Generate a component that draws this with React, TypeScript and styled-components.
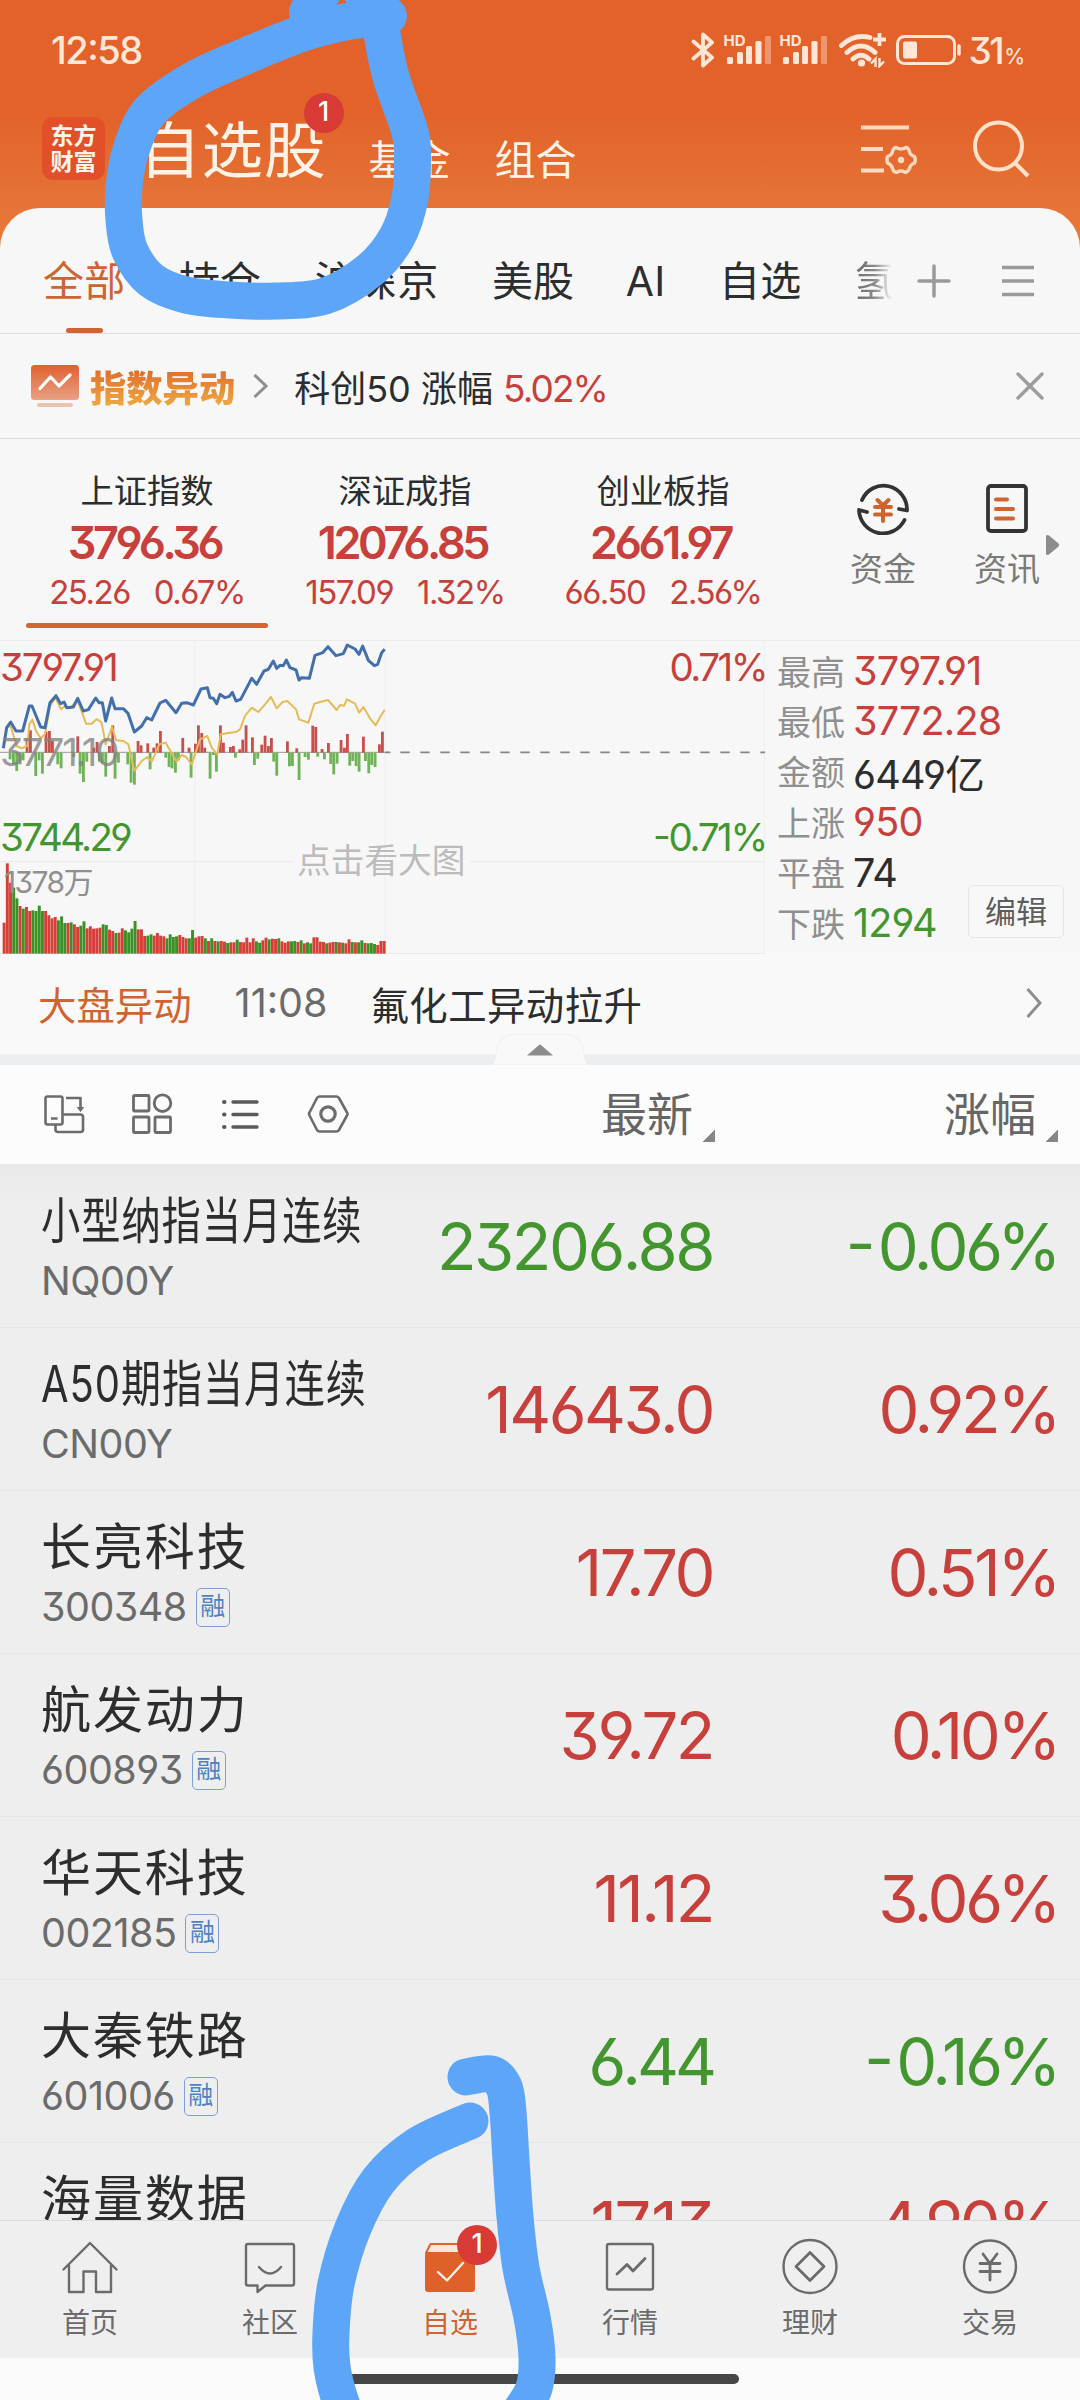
import React from "react";
import styled, { createGlobalStyle, css } from "styled-components";

const RED = "#c8403b";
const GREEN = "#43962f";
const ORANGE = "#cf6430";
const INK = "#2b2d2e";
const GRAY = "#6b6b6b";
const MARKER = "#5ca5f8";

const Global = createGlobalStyle`
  * { box-sizing: border-box; }
  body { margin: 0; background: #f7f7f7; }
`;

const Screen = styled.div`
  position: relative;
  width: 1080px;
  height: 2400px;
  overflow: hidden;
  display: flex;
  flex-direction: column;
  font-family: Inter, "Noto Sans CJK SC", sans-serif;
  font-feature-settings: "cv03", "cv04", "cv09", "case";
  color: ${INK};
  background: linear-gradient(#e3622b 0px, #e2622a 110px, #e77a3a 240px);
  white-space: nowrap;
`;

/* ---------- status bar + header ---------- */
const StatusBar = styled.div`
  height: 100px;
  flex: none;
  display: flex;
  align-items: center;
  justify-content: space-between;
  padding: 0 56px 0 51px;
  color: #ffe6d6;
`;
const Clock = styled.span`
  font-size: 38px;
  font-weight: 500;
  letter-spacing: -1.5px;
`;
const StatusIcons = styled.div`
  display: flex;
  align-items: center;
`;
const Battery = styled.span`
  font-size: 37px;
  font-weight: 500;
  letter-spacing: -2.5px;
  margin-left: 7px;
  small {
    font-size: 21px;
    font-weight: 500;
    letter-spacing: -1px;
    margin-left: 2px;
  }
`;
const Header = styled.header`
  height: 108px;
  flex: none;
  display: flex;
  padding-left: 42px;
  color: #fff2e6;
`;
const Logo = styled.div`
  width: 63px;
  height: 63px;
  margin-top: 17px;
  border-radius: 11px;
  background: #e2502a;
  display: flex;
  flex-direction: column;
  align-items: center;
  justify-content: center;
  font-size: 23px;
  line-height: 26px;
  font-weight: 700;
  color: #fff5ec;
`;
const MainTab = styled.div`
  position: relative;
  margin-left: 34px;
  margin-top: 15px;
  font-size: 61.5px;
  line-height: 72px;
  letter-spacing: 1px;
`;
const SubTab = styled.div<{ $gap: number }>`
  margin-left: ${(p) => p.$gap}px;
  margin-top: 35px;
  font-size: 41px;
  line-height: 50px;
`;
const Dot = styled.span`
  position: absolute;
  width: 40px;
  height: 40px;
  border-radius: 50%;
  background: #d83a36;
  color: #fff;
  font-size: 27px;
  font-weight: 500;
  line-height: 38px;
  letter-spacing: 0;
  text-align: center;
`;
const HeaderDot = styled(Dot)`
  right: -17px;
  top: -22px;
`;
const HeaderIcons = styled.div`
  margin-left: auto;
  margin-right: 50px;
  margin-top: 20px;
  display: flex;
  gap: 56px;
`;

/* ---------- panel ---------- */
const Panel = styled.main`
  flex: 1;
  min-height: 0;
  display: flex;
  flex-direction: column;
  background: #f7f7f7;
  border-radius: 40px 40px 0 0;
  overflow: hidden;
`;
const Tabs = styled.nav`
  height: 126px;
  flex: none;
  display: flex;
  border-bottom: 1px solid #dcdcdc;
  padding-left: 43px;
  font-size: 41px;
  line-height: 146px;
  letter-spacing: 0.2px;
`;
const Tab = styled.div<{ $active?: boolean; $pull?: number }>`
  position: relative;
  margin-right: 53.5px;
  margin-left: ${(p) => p.$pull ?? 0}px;
  color: ${(p) => (p.$active ? ORANGE : INK)};
  ${(p) =>
    p.$active &&
    css`
      &::after {
        content: "";
        position: absolute;
        left: 23px;
        bottom: 0;
        width: 37px;
        height: 5px;
        border-radius: 3px;
        background: ${ORANGE};
      }
    `}
`;
const FadeTab = styled(Tab)`
  width: 37px;
  margin-right: 26px;
  overflow: hidden;
  background: linear-gradient(90deg, #6a6a6a, #8a8a8a 55%, rgba(160, 160, 160, 0.1));
  -webkit-background-clip: text;
  background-clip: text;
  color: transparent;
`;
const TabIcons = styled.div`
  display: flex;
  align-items: center;
  gap: 51px;
  padding-top: 21px;
`;

const Notice = styled.div`
  height: 105px;
  flex: none;
  display: flex;
  align-items: center;
  padding: 0 36px 0 31px;
  border-bottom: 1px solid #dcdcdc;
  font-size: 36px;
`;
const NoticeTitle = styled.span`
  margin-left: 10px;
  margin-right: 18px;
  font-weight: 900;
  font-size: 36.3px;
  background: linear-gradient(#e06a2c 15%, #eda63f 85%);
  -webkit-background-clip: text;
  background-clip: text;
  color: transparent;
`;
const NoticeText = styled.span`
  margin-left: 26px;
  flex: 1;
  letter-spacing: 0;
  b {
    font-weight: 400;
    font-size: 37px;
    color: ${RED};
    letter-spacing: -1.9px;
  }
`;

const Indices = styled.section`
  height: 201px;
  flex: none;
  display: flex;
  padding-left: 18px;
`;
const IndexCard = styled.div`
  position: relative;
  width: 258px;
  display: flex;
  flex-direction: column;
  align-items: center;
  padding-top: 30px;
`;
const IndexName = styled.div`
  font-size: 33.3px;
  line-height: 44px;
`;
const IndexValue = styled.div`
  margin-top: 8px;
  padding-right: 5px;
  font-size: 45px;
  line-height: 44px;
  font-weight: 600;
  letter-spacing: -3.4px;
  color: ${RED};
`;
const IndexDelta = styled.div`
  display: flex;
  gap: 24px;
  margin-top: 9px;
  font-size: 33px;
  line-height: 36px;
  letter-spacing: -1.5px;
  color: ${RED};
`;
const ActiveBar = styled.div`
  width: 242px;
  height: 5px;
  margin-top: 13px;
  border-radius: 3px;
  background: #d4662f;
`;
const Shortcut = styled.div<{ $left: number }>`
  width: 66px;
  margin-left: ${(p) => p.$left}px;
  padding-top: 42px;
  display: flex;
  flex-direction: column;
  align-items: center;
  font-size: 33px;
  line-height: 46px;
  color: #7a7a7a;
  svg {
    margin-bottom: 11px;
  }
`;
const MoreArrow = styled.svg`
  margin: 95px 0 0 6px;
`;

const Market = styled.section`
  height: 313px;
  flex: none;
  display: flex;
  border-top: 1px solid #ebebeb;
`;
const ChartBox = styled.div`
  position: relative;
  width: 765px;
  height: 313px;
`;
const ChartLabel = styled.span<{
  $top: number;
  $color: string;
  $size?: number;
  $right?: boolean;
  $x?: number;
  $ls?: number;
}>`
  position: absolute;
  top: ${(p) => p.$top}px;
  ${(p) => (p.$right ? "right: -1px" : `left: ${p.$x ?? 0}px`)};
  color: ${(p) => p.$color};
  font-size: ${(p) => p.$size ?? 38.5}px;
  line-height: 44px;
  letter-spacing: ${(p) => p.$ls ?? -2}px;
`;
const Stats = styled.div`
  flex: 1;
  position: relative;
  padding: 4px 0 0 12px;
`;
const Stat = styled.div<{ $color: string }>`
  display: flex;
  align-items: center;
  height: 50.4px;
  font-size: 34px;
  color: #8f8f8f;
  b {
    margin: 1.5px 0 0 8px;
    font-weight: 400;
    font-size: 39.5px;
    letter-spacing: -0.8px;
    color: ${(p) => p.$color};
  }
`;
const EditButton = styled.button`
  position: absolute;
  right: 16px;
  top: 244px;
  width: 96px;
  height: 53px;
  padding: 0 0 4px;
  border: 1px solid #e6e6e6;
  border-radius: 5px;
  background: #f8f8f8;
  font: 31px Inter, "Noto Sans CJK SC", sans-serif;
  color: #5d5d5d;
`;

const News = styled.div`
  height: 101px;
  flex: none;
  display: flex;
  align-items: center;
  padding: 0 38px 2px;
  font-size: 38.4px;
  background: #f9f9f9;
`;
const NewsTag = styled.span`
  color: ${ORANGE};
`;
const NewsTime = styled.span`
  margin: 1px 43px 0 43px;
  font-size: 39.5px;
  color: ${GRAY};
`;
const NewsText = styled.span`
  letter-spacing: 0.45px;
`;
const Spacer = styled.div`
  flex: 1;
`;
const Divider = styled.div`
  position: relative;
  height: 11px;
  flex: none;
  background: #edeef0;
`;
const Handle = styled.svg`
  position: absolute;
  left: 491px;
  top: -21px;
`;

const Toolbar = styled.div`
  height: 99px;
  flex: none;
  display: flex;
  align-items: center;
  background: #fcfcfc;
  padding: 0 0 2px 43px;
`;
const ToolIcons = styled.div`
  width: 558px;
  display: flex;
  gap: 46px;
`;
const Sort = styled.div<{ $width: number }>`
  width: ${(p) => p.$width}px;
  display: flex;
  justify-content: flex-end;
  align-items: center;
  font-size: 46px;
  line-height: 60px;
  color: #666;
  &::after {
    content: "";
    width: 13px;
    height: 13px;
    margin: 44px 0 0 9px;
    background: linear-gradient(135deg, transparent 50%, #85858a 50%);
  }
`;

const List = styled.div`
  flex: 1;
  min-height: 0;
  overflow: hidden;
  padding-top: 1px;
  background: linear-gradient(#e9e9e9, #eeeeee 40px, #eeeeee);
`;
const Row = styled.div`
  height: 163px;
  display: grid;
  grid-template-columns: 375px 338px 345px;
  border-bottom: 1px solid #e6e6e6;
`;
const Security = styled.div`
  padding: 26px 0 0 41px;
`;
const Name = styled.div<{ $scale?: number }>`
  width: max-content;
  font-size: 50px;
  line-height: 60px;
  letter-spacing: ${(p) => (p.$scale ? 1.2 : 1.9)}px;
  transform-origin: 0 50%;
  ${(p) => p.$scale && `transform: scaleX(${p.$scale});`}
`;
const CodeLine = styled.div`
  display: flex;
  align-items: center;
  height: 40px;
  margin-top: 10px;
  font-size: 39.5px;
  letter-spacing: -0.5px;
  color: ${GRAY};
`;
const Margin = styled.span`
  width: 34px;
  height: 39px;
  margin-left: 9px;
  border: 1.5px solid #7d9fd2;
  border-radius: 5px;
  font-size: 25px;
  line-height: 35px;
  letter-spacing: 0;
  color: #4f82c4;
  display: flex;
  justify-content: center;
`;
const Figure = styled.div<{ $up: boolean; $ls: number }>`
  padding-top: 42px;
  text-align: right;
  font-size: 65px;
  line-height: 80px;
  letter-spacing: ${(p) => p.$ls}px;
  color: ${(p) => (p.$up ? RED : GREEN)};
`;
const Sign = styled.span`
  letter-spacing: 2px;
`;

/* ---------- bottom ---------- */
const BottomNav = styled.nav`
  height: 138px;
  flex: none;
  display: grid;
  grid-template-columns: repeat(6, 180px);
  border-top: 1px solid #dcdcde;
  background: #efeff0;
`;
const NavItem = styled.div<{ $active?: boolean }>`
  position: relative;
  display: flex;
  flex-direction: column;
  align-items: center;
  padding-top: 16px;
  font-size: 28px;
  line-height: 42px;
  color: ${(p) => (p.$active ? ORANGE : "#6b6b6b")};
  svg {
    margin-bottom: 5px;
  }
`;
const NavDot = styled(Dot)`
  left: 97px;
  top: 4px;
`;
const Gesture = styled.div`
  height: 42px;
  flex: none;
  background: #fafafa;
  padding-top: 16px;
  &::after {
    content: "";
    display: block;
    width: 398px;
    height: 10px;
    margin: 0 auto;
    border-radius: 5px;
    background: #474747;
  }
`;
const Scribble = styled.svg`
  position: absolute;
  inset: 0;
  pointer-events: none;
`;

/* Catmull-Rom curve through a list of points. */
type Pt = [number, number];
const smooth = (p: Pt[]) => {
  let d = `M${p[0][0]} ${p[0][1]}`;
  for (let i = 0; i < p.length - 1; i++) {
    const a = p[i - 1] ?? p[i];
    const b = p[i];
    const c = p[i + 1];
    const e = p[i + 2] ?? c;
    d += ` C${b[0] + (c[0] - a[0]) / 6} ${b[1] + (c[1] - a[1]) / 6} ${c[0] - (e[0] - b[0]) / 6} ${
      c[1] - (e[1] - b[1]) / 6
    } ${c[0]} ${c[1]}`;
  }
  return d;
};

const LOOP_TOP: Pt[] = [
  [385, 17], [345, 22], [303, 33], [248, 55], [193, 80], [150, 111], [131, 150], [124, 187], [124, 220],
  [130, 251], [151, 280], [186, 295], [230, 300], [275, 301], [325, 296], [370, 270], [397, 237], [410, 198],
  [412.5, 158], [410, 132], [391, 77], [382, 34],
];
const LOOP_LEFT: Pt[] = [
  [470, 2121], [418, 2145], [379, 2180], [353, 2228], [336, 2284], [331, 2333], [332, 2367], [340, 2400], [352, 2428],
];
const LOOP_RIGHT: Pt[] = [
  [466, 2077], [491, 2074], [504, 2087], [508, 2112], [511, 2160], [515, 2217], [521, 2268], [532, 2317], [537, 2357],
  [534, 2388], [520, 2412],
];

/* ---------- intraday chart ---------- */
const PRICE = [
  10, 352, 20, 290, 32, 273, 48, 300, 68, 300, 88, 225, 96, 225, 122, 288, 135, 290, 150, 215, 168, 194, 182, 218,
  192, 213, 200, 230, 220, 228, 233, 202, 250, 240, 265, 236, 287, 201, 297, 215, 307, 215, 317, 270, 335, 201, 345,
  233, 370, 233, 384, 247, 403, 303, 425, 285, 440, 260, 455, 267, 480, 216, 497, 208, 528, 245, 545, 217, 560, 215,
  580, 222, 603, 174, 622, 170, 630, 200, 640, 202, 650, 218, 660, 190, 675, 200, 688, 196, 697, 184, 708, 210, 722,
  205, 755, 142, 770, 160, 792, 120, 805, 115, 820, 90, 830, 112, 840, 103, 850, 104, 859, 87, 870, 110, 888, 117,
  897, 147, 905, 140, 928, 142, 945, 73, 968, 65, 984, 47, 1008, 74, 1030, 68, 1042, 42, 1065, 54, 1077, 70, 1088,
  45, 1105, 88, 1123, 104, 1133, 100, 1145, 65, 1154, 55,
];
const AVERAGE = [
  12, 335, 20, 290, 32, 285, 50, 345, 65, 352, 82, 345, 88, 280, 97, 266, 108, 300, 122, 322, 135, 310, 150, 225,
  166, 200, 183, 235, 195, 225, 210, 232, 232, 208, 243, 235, 258, 278, 275, 278, 290, 264, 305, 275, 317, 340, 336,
  288, 348, 328, 370, 330, 385, 340, 403, 420, 425, 390, 442, 378, 455, 392, 478, 340, 497, 335, 530, 392, 545, 372,
  558, 378, 575, 400, 600, 325, 622, 315, 635, 350, 652, 370, 662, 310, 690, 305, 708, 303, 720, 295, 735, 255, 755,
  230, 775, 243, 795, 220, 813, 198, 830, 232, 848, 213, 862, 210, 888, 235, 897, 265, 925, 275, 943, 218, 960, 213,
  984, 207, 1010, 237, 1020, 222, 1032, 224, 1041, 205, 1065, 218, 1078, 245, 1090, 228, 1110, 262, 1127, 283, 1142,
  255, 1154, 237,
];
const UP = [
  78, 322, 88, 298, 135, 302, 145, 300, 154, 330, 230, 316, 278, 350, 288, 333, 325, 345, 335, 283, 411, 330, 420,
  343, 440, 337, 458, 350, 468, 337, 478, 300, 545, 321, 564, 350, 583, 338, 592, 283, 602, 306, 611, 350, 658, 283,
  667, 335, 688, 348, 697, 345, 716, 355, 725, 326, 735, 283, 754, 319, 782, 341, 792, 314, 802, 345, 811, 321, 859,
  331, 887, 352, 935, 284, 944, 288, 963, 354, 982, 336, 1020, 327, 1030, 350, 1039, 309, 1087, 317, 1135, 340, 1144,
  302,
];
const DOWN = [
  30, 385, 40, 400, 50, 420, 60, 400, 69, 388, 107, 435, 117, 388, 127, 428, 173, 400, 183, 412, 221, 378, 240, 428,
  250, 453, 260, 392, 298, 392, 307, 396, 317, 437, 345, 443, 355, 395, 383, 400, 393, 455, 403, 461, 450, 415, 497,
  380, 507, 408, 516, 412, 526, 425, 535, 388, 573, 440, 630, 443, 640, 372, 649, 422, 706, 380, 763, 402, 773, 383,
  821, 392, 830, 434, 868, 406, 877, 405, 897, 447, 915, 378, 925, 386, 953, 377, 973, 385, 992, 399, 1001, 430,
  1011, 398, 1049, 404, 1058, 390, 1068, 405, 1077, 422, 1096, 390, 1106, 427, 1115, 402, 1125, 408,
];
const VOLUME =
  "875R 697R 755R 770G 802G 825R 833G 828R 840R 838G 840G 824G 840G 840R 853R 862R 858R 868G 856G 876G 876R 874G 880R 888R 884G 871G 892R 886R 893R 892R 890R 880G 882G 896R 900R 906G 905R 892R 898G 904G 893G 870G 895R 895R 915R 914G 910G 914R 906R 914R 916R 922G 910G 918G 916G 912R 918R 922R 922G 897G 920R 916R 915R 922G 930R 922G 930R 931G 930R 932R 936G 934R 934R 926G 933R 934R 920R 934R 922R 931G 935G 928R 920R 925G 923R 924R 922G 931R 935R 931R 931G 930G 933R 928G 937R 934G 937G 919R 919R 932R 933R 937G 935R 933R 933G 934R 935G 937R 925R 933G 934R 934G 928G 936R 937G 936G 939G 942R 930R 930R".split(
    " "
  );
const pairs = (a: number[]): Pt[] => a.reduce<Pt[]>((r, v, i) => (i % 2 ? r : [...r, [v, a[i + 1]]]), []);
const line = (a: number[]) => pairs(a).map((p) => p.join(",")).join(" ");

const Chart = () => (
  <svg width="765" height="313" viewBox="0 30 2295 939" style={{ display: "block" }}>
    <g stroke="#e9e9e9" strokeWidth="3">
      <path d="M585 30V969M1155 30V969M2293 30V969" stroke="#efefef" />
      <path d="M0 692H878M1410 692H2295M0 967H2295" />
    </g>
    <path d="M0 364H1172" stroke="#9a9a9a" strokeWidth="3" />
    <path d="M1155 364H2295" stroke="#858585" strokeWidth="5" strokeDasharray="28 32" strokeDashoffset="14" />
    {pairs(UP).map(([x, y]) => (
      <rect key={x} x={x - 1} y={y} width="8.500" height={365 - y} fill="#c8504c" />
    ))}
    {pairs(DOWN).map(([x, y]) => (
      <rect key={x} x={x - 4} y="365" width="8.500" height={y - 365} fill="#6eb356" />
    ))}
    {VOLUME.map((v, i) => {
      const y = parseInt(v, 10);
      return (
        <rect
          key={i}
          x={8 + i * 9.58}
          y={y}
          width="8.8"
          height={968 - y}
          fill={v.endsWith("R") ? "#d63e38" : "#3a9126"}
        />
      );
    })}
    <polyline points={line(AVERAGE)} fill="none" stroke="#e6bb57" strokeWidth="6" strokeLinejoin="round" />
    <polyline points={line(PRICE)} fill="none" stroke="#4370ac" strokeWidth="9" strokeLinejoin="round" />
  </svg>
);

/* ---------- icons ---------- */
const Bluetooth = () => (
  <svg width="24" height="36" viewBox="0 0 24 36" fill="none" stroke="currentColor" strokeWidth="3.800" strokeLinejoin="round" strokeLinecap="round">
    <path d="M2.5 9.5L21 25.5L12 33.5V2.5L21 10.5L2.5 26.5" />
  </svg>
);
const HdLabel = styled.span`
  position: absolute;
  left: -1px;
  top: 0;
  font-size: 15px;
  line-height: 12px;
  font-weight: 700;
`;
const SignalBox = styled.div`
  position: relative;
  width: 46px;
  height: 30px;
  margin-left: 10px;
`;
const Signal = () => (
  <SignalBox>
    <HdLabel>HD</HdLabel>
    <svg width="46" height="30" fill="currentColor">
      <rect x="2" y="22" width="6" height="7" rx="1.5" />
      <rect x="12" y="17" width="6" height="12" rx="1.5" />
      <rect x="21" y="11" width="6" height="18" rx="1.5" />
      <rect x="30.500" y="6" width="6" height="23" rx="1.5" />
      <rect x="40" y="1" width="6" height="28" rx="1.5" opacity="0.4" />
    </svg>
  </SignalBox>
);
const Wifi = () => (
  <svg width="48" height="36" viewBox="0 0 48 36" fill="none" stroke="currentColor" strokeWidth="4.800" style={{ marginLeft: 12 }}>
    <path d="M2.500 13.500Q15 1.500 31 5.500M8 20.500Q22 7.500 36 20.500M14 27Q22 19.500 30 27" strokeLinecap="round" />
    <circle cx="22.500" cy="31" r="3.600" fill="currentColor" stroke="none" />
    <path d="M34 7.500H47M40.500 1V14" strokeWidth="3.800" />
    <path d="M36.500 35V27L32 31.500M40.500 26V34L45 29.500" strokeWidth="2.400" />
  </svg>
);
const BatteryIcon = () => (
  <svg width="66" height="30" fill="none" stroke="currentColor" strokeWidth="3" style={{ marginLeft: 9 }}>
    <rect x="1.500" y="1.500" width="57" height="27" rx="7" />
    <rect x="7" y="6.500" width="14" height="17" rx="2" fill="currentColor" stroke="none" />
    <path d="M63 11V19" strokeWidth="3.500" strokeLinecap="round" />
  </svg>
);
const FilterIcon = () => (
  <svg width="56" height="54" fill="none" stroke="#ffd9bd" strokeWidth="4">
    <path d="M0 7.500H48M0 29H22M0 50.500H23" />
    <path
      d="M35 27.500Q40 30.500 45 27.500Q47.500 28 48.500 31.500Q49 35 53.500 36.500Q55 40 53.500 43Q49 45 48.500 48.500Q47 52 44.500 52.500Q40 49.500 35.500 52.500Q32.500 52 31.500 48.500Q31 45 26.500 43Q25.500 40 26.500 36.500Q31 35 31.500 31.500Q32.500 28 35 27.500Z"
      strokeWidth="3.400"
      strokeLinejoin="round"
    />
    <circle cx="40" cy="40" r="3.200" fill="#ffd9bd" stroke="none" />
  </svg>
);
const SearchIcon = () => (
  <svg width="57" height="58" fill="none" stroke="#ffe0c8" strokeWidth="4">
    <circle cx="25.500" cy="26" r="23.500" />
    <path d="M42 43L55 56" />
  </svg>
);
const PlusIcon = () => (
  <svg width="34" height="34" stroke="#9a9a9a" strokeWidth="3.500" strokeLinecap="round">
    <path d="M2 17H32M17 2V32" />
  </svg>
);
const MenuIcon = () => (
  <svg width="32" height="34" stroke="#9a9a9a" strokeWidth="3.600">
    <path d="M0 3.500H32M0 17H32M0 30.500H32" />
  </svg>
);
const NoticeIcon = () => (
  <svg width="49" height="44" viewBox="0 0 49 44" fill="none">
    <defs>
      <linearGradient id="ng" x2="0" y2="1">
        <stop stopColor="#e0602f" />
        <stop offset="1" stopColor="#e9a184" />
      </linearGradient>
    </defs>
    <rect y="1" width="48" height="35" rx="3.500" fill="url(#ng)" />
    <rect x="6" y="39" width="36" height="4" rx="2" fill="#ecc3b0" />
    <path d="M9 24.500L19.500 13L28 22L39 11" stroke="#fff" strokeWidth="3.200" strokeLinecap="round" strokeLinejoin="round" />
  </svg>
);
const Chevron = ({ w, h }: { w: number; h: number }) => (
  <svg width={w} height={h} fill="none" stroke="#8e8e8e" strokeWidth="3">
    <path d={`M1.500 1L${w - 2} ${h / 2}L1.500 ${h - 1}`} />
  </svg>
);
const CloseIcon = () => (
  <svg width="28" height="28" stroke="#9c9c9c" strokeWidth="3.400" strokeLinecap="round">
    <path d="M2 2L26 26M26 2L2 26" />
  </svg>
);
const FundIcon = () => (
  <svg width="52" height="54" viewBox="0 0 52 54" fill="none" stroke="#333" strokeWidth="3.800" strokeLinecap="round" strokeLinejoin="round">
    <path d="M5 19A23.500 24 0 0 1 50 29.500L42 28" />
    <path d="M10 31L2 29A24 24 0 0 0 47.500 39" />
    <path d="M20.500 19L26 24.500L31.500 19M18 26H34M18 33.500H34M26 25V40" stroke={ORANGE} strokeWidth="4" />
  </svg>
);
const DocIcon = () => (
  <svg width="44" height="54" viewBox="0 0 44 54" fill="none" stroke="#333" strokeWidth="3.800" strokeLinecap="round">
    <rect x="3" y="5" width="38" height="45" rx="3" />
    <path d="M11 18.500H22M11 28H28M11 37.500H28" stroke={ORANGE} strokeWidth="4" />
  </svg>
);
const RotateIcon = () => (
  <svg width="42" height="42" fill="none" stroke="#6c6c6c" strokeWidth="2.600" strokeLinejoin="round">
    <rect x="2.500" y="3.500" width="17" height="28" rx="2" />
    <path d="M8 25.500H14.500M20.500 21.500H37.500Q40 21.500 40 24V36.500Q40 39 37.500 39H15Q12.500 39 12.500 36.500V32M23 5H37.500V16" />
    <path d="M34.500 14.500H40.500L37.500 18.500Z" fill="#6c6c6c" strokeWidth="1" />
  </svg>
);
const GridIcon = () => (
  <svg width="42" height="42" fill="none" stroke="#6c6c6c" strokeWidth="2.800">
    <rect x="2.500" y="2.500" width="15.500" height="15.500" rx="1" />
    <circle cx="31.500" cy="10.200" r="8.300" />
    <rect x="2.500" y="24" width="15.500" height="15.500" rx="1" />
    <rect x="24" y="24" width="15.500" height="15.500" rx="1" />
  </svg>
);
const ListIcon = () => (
  <svg width="42" height="42" stroke="#5a5a5a" strokeWidth="3.400" strokeLinecap="round">
    <path d="M14 9H38M14 21.500H38M14 34H38" />
    <path d="M5 9H5.500M5 21.500H5.500M5 34H5.500" strokeWidth="4" />
  </svg>
);
const HexIcon = () => (
  <svg width="44" height="42" fill="none" stroke="#6c6c6c" strokeWidth="2.600" strokeLinejoin="round">
    <path d="M12.500 3.500H29.500Q31 3.500 32 5L40 19.500Q41 21 40 22.500L32 37Q31 38.500 29.500 38.500H12.500Q11 38.500 10 37L2.500 22.500Q1.500 21 2.500 19.500L10 5Q11 3.500 12.500 3.500Z" />
    <circle cx="21" cy="21" r="7.200" strokeWidth="3.200" />
  </svg>
);

const NavSvg = styled.svg.attrs({ width: 60, height: 60, viewBox: "0 0 60 60" })`
  fill: none;
  stroke: #6b6b6b;
  stroke-width: 2.4;
  stroke-linecap: round;
  stroke-linejoin: round;
`;
const NAV: { label: string; icon: React.ReactNode; active?: boolean }[] = [
  {
    label: "首页",
    icon: (
      <NavSvg>
        <path d="M3.500 32.500L30 6L56.500 32.500M9 28V55H23.500V34.500H36V55H51V28" />
      </NavSvg>
    ),
  },
  {
    label: "社区",
    icon: (
      <NavSvg>
        <path d="M8 7H52Q54 7 54 9V46.500Q54 48.500 52 48.500H25.500L17.500 55V48.500H8Q6 48.500 6 46.500V9Q6 7 8 7Z" />
        <path d="M19 30Q30 43 41 30" />
      </NavSvg>
    ),
  },
  {
    label: "自选",
    active: true,
    icon: (
      <NavSvg>
        <path d="M10.500 7H49.500L54 16H6Z" fill="#fbe6d8" stroke="#e0652b" strokeWidth="2" />
        <rect x="5" y="15" width="50" height="40" rx="3" fill="#e0602a" stroke="none" />
        <path d="M18 35L27 43.500L43 26" stroke="#fff2e8" />
      </NavSvg>
    ),
  },
  {
    label: "行情",
    icon: (
      <NavSvg>
        <rect x="7" y="7" width="46" height="45.500" rx="2" />
        <path d="M17 37L27 27.500L33 34L45 21.500" strokeWidth="2.800" />
      </NavSvg>
    ),
  },
  {
    label: "理财",
    icon: (
      <NavSvg>
        <circle cx="30" cy="29.500" r="26.500" />
        <path d="M30 15.500L44 29.500L30 43.500L16 29.500Z" strokeWidth="2.800" />
      </NavSvg>
    ),
  },
  {
    label: "交易",
    icon: (
      <NavSvg>
        <circle cx="30" cy="29.500" r="26" />
        <path d="M23 17L30 26.500L37 17M20 26.500H40M20 34.500H40M30 26.500V43" strokeWidth="2.800" />
      </NavSvg>
    ),
  },
];

const INDICES = [
  ["上证指数", "3796.36", "25.26", "0.67%"],
  ["深证成指", "12076.85", "157.09", "1.32%"],
  ["创业板指", "2661.97", "66.50", "2.56%"],
];
const STATS = [
  ["最高", "3797.91", RED],
  ["最低", "3772.28", RED],
  ["金额", "6449亿", INK],
  ["上涨", "950", RED],
  ["平盘", "74", INK],
  ["下跌", "1294", GREEN],
];
const ROWS = [
  { name: "小型纳指当月连续", code: "NQ00Y", price: "23206.88", pct: "-0.06%", scale: 0.785 },
  { name: "A50期指当月连续", code: "CN00Y", price: "14643.0", pct: "0.92%", scale: 0.8 },
  { name: "长亮科技", code: "300348", price: "17.70", pct: "0.51%", margin: true },
  { name: "航发动力", code: "600893", price: "39.72", pct: "0.10%", margin: true },
  { name: "华天科技", code: "002185", price: "11.12", pct: "3.06%", margin: true },
  { name: "大秦铁路", code: "601006", price: "6.44", pct: "-0.16%", margin: true },
  { name: "海量数据", code: "603138", price: "17.13", pct: "4.90%", margin: true },
];

export default function App() {
  return (
    <Screen>
      <Global />
      <StatusBar>
        <Clock>12:58</Clock>
        <StatusIcons>
          <Bluetooth />
          <Signal />
          <Signal />
          <Wifi />
          <BatteryIcon />
          <Battery>
            31<small>%</small>
          </Battery>
        </StatusIcons>
      </StatusBar>
      <Header>
        <Logo>
          <span>东方</span>
          <span>财富</span>
        </Logo>
        <MainTab>
          自选股<HeaderDot>1</HeaderDot>
        </MainTab>
        <SubTab $gap={42}>基金</SubTab>
        <SubTab $gap={44}>组合</SubTab>
        <HeaderIcons>
          <FilterIcon />
          <SearchIcon />
        </HeaderIcons>
      </Header>

      <Panel>
        <Tabs>
          <Tab $active>全部</Tab>
          <Tab>持仓</Tab>
          <Tab>沪深京</Tab>
          <Tab>美股</Tab>
          <Tab $pull={-2}>AI</Tab>
          <Tab>自选</Tab>
          <FadeTab $pull={-1}>氢</FadeTab>
          <TabIcons>
            <PlusIcon />
            <MenuIcon />
          </TabIcons>
        </Tabs>
        <Notice>
          <NoticeIcon />
          <NoticeTitle>指数异动</NoticeTitle>
          <Chevron w={15} h={24} />
          <NoticeText>
            科创50 涨幅 <b>5.02%</b>
          </NoticeText>
          <CloseIcon />
        </Notice>
        <Indices>
          {INDICES.map(([name, value, diff, pct], i) => (
            <IndexCard key={name}>
              <IndexName>{name}</IndexName>
              <IndexValue>{value}</IndexValue>
              <IndexDelta>
                <span>{diff}</span>
                <span>{pct}</span>
              </IndexDelta>
              {i === 0 && <ActiveBar />}
            </IndexCard>
          ))}
          <Shortcut $left={58}>
            <FundIcon />
            资金
          </Shortcut>
          <Shortcut $left={58}>
            <DocIcon />
            资讯
          </Shortcut>
          <MoreArrow width="14" height="22">
            <path d="M0 3Q0 0 3 1.500L12.500 9.500Q14 11 12.500 12.500L3 20.500Q0 22 0 19Z" fill="#8c8c8c" />
          </MoreArrow>
        </Indices>
        <Market>
          <ChartBox>
            <Chart />
            <ChartLabel $top={4} $color={RED}>3797.91</ChartLabel>
            <ChartLabel $top={89} $color="rgba(130,130,130,.8)">3771.10</ChartLabel>
            <ChartLabel $top={174} $color={GREEN} $ls={-2.7}>3744.29</ChartLabel>
            <ChartLabel $top={219} $color="#8f8f8f" $size={30} $x={4} $ls={-1.6}>1378万</ChartLabel>
            <ChartLabel $top={4} $color={RED} $right $ls={-2.5}>0.71%</ChartLabel>
            <ChartLabel $top={174} $color={GREEN} $right $ls={-2.3}>-0.71%</ChartLabel>
            <ChartLabel $top={198} $color="#bcbcbc" $size={33.7} $x={297} $ls={0}>点击看大图</ChartLabel>
          </ChartBox>
          <Stats>
            {STATS.map(([label, value, color]) => (
              <Stat key={label} $color={color}>
                {label}
                <b>{value}</b>
              </Stat>
            ))}
            <EditButton>编辑</EditButton>
          </Stats>
        </Market>
        <News>
          <NewsTag>大盘异动</NewsTag>
          <NewsTime>11:08</NewsTime>
          <NewsText>氟化工异动拉升</NewsText>
          <Spacer />
          <Chevron w={16} h={30} />
        </News>
        <Divider>
          <Handle width="98" height="32">
            <path d="M0 32Q4 30 5 20Q7 1 24 1H74Q91 1 93 20Q94 30 98 32Z" fill="#f9f9f9" stroke="#efefef" />
            <path d="M36 22.500L48 12Q49 11 50 12L62 22.500Z" fill="#8c8c8c" />
          </Handle>
        </Divider>
        <Toolbar>
          <ToolIcons>
            <RotateIcon />
            <GridIcon />
            <ListIcon />
            <HexIcon />
          </ToolIcons>
          <Sort $width={114}>最新</Sort>
          <Sort $width={343}>涨幅</Sort>
        </Toolbar>
        <List>
          {ROWS.map((r) => {
            const down = r.pct[0] === "-";
            return (
              <Row key={r.code}>
                <Security>
                  <Name $scale={r.scale}>{r.name}</Name>
                  <CodeLine>
                    {r.code}
                    {r.margin && <Margin>融</Margin>}
                  </CodeLine>
                </Security>
                <Figure $up={!down} $ls={r.price.length < 5 ? -4 : -2.5}>
                  {r.price}
                </Figure>
                <Figure $up={!down} $ls={-3.3}>
                  {down && <Sign>-</Sign>}
                  {down ? r.pct.slice(1) : r.pct}
                </Figure>
              </Row>
            );
          })}
        </List>
      </Panel>

      <BottomNav>
        {NAV.map((n) => (
          <NavItem key={n.label} $active={n.active}>
            {n.icon}
            {n.label}
            {n.active && <NavDot>1</NavDot>}
          </NavItem>
        ))}
      </BottomNav>
      <Gesture />

      <Scribble width="1080" height="2400" fill="none" stroke={MARKER} strokeWidth="37" strokeLinecap="round" strokeLinejoin="round">
        <path d={smooth(LOOP_TOP)} />
        <path d="M308 12L325 -12M362 -8L388 16" strokeWidth="38" />
        <path d={smooth(LOOP_LEFT)} />
        <path d={smooth(LOOP_RIGHT)} />
      </Scribble>
    </Screen>
  );
}
